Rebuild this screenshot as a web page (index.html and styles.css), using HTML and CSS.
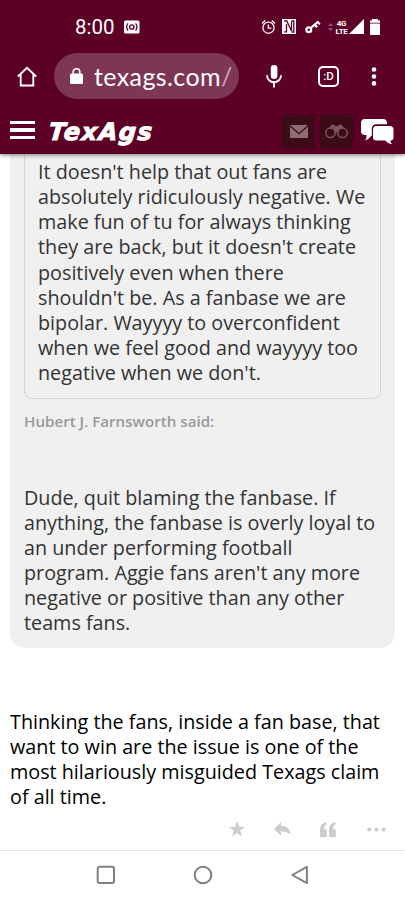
FILE: index.html
```html
<!DOCTYPE html>
<html lang="en">
<head>
    <meta charset="UTF-8">
    <meta name="viewport" content="width=device-width, initial-scale=1.0">
    <title>TexAgs</title>
    <link rel="stylesheet" href="styles.css">
</head>
<body>
    <div class="screen">

        <header class="top">
            <!-- Status bar -->
            <div class="status-bar">
                <span class="clock">8:00</span>
                <svg class="cast" width="16" height="14" viewBox="0 0 16 14">
                    <rect y=".5" width="15.5" height="13" rx="1.5" fill="#fff"/>
                    <g fill="none" stroke="#5c0025" stroke-width="1.3">
                        <circle cx="7.8" cy="7" r="2.2"/>
                        <path d="M4 3.400Q1.300 7 4 10.600M11.600 3.400Q14.300 7 11.600 10.600"/>
                    </g>
                </svg>
                <svg class="alarm" width="15" height="16" viewBox="0 0 15 16" fill="none" stroke="#fff" stroke-width="1.3">
                    <circle cx="7.5" cy="8.7" r="5.6"/>
                    <path d="M7.300 5.500v3.700h3M1 4.400 4.200 1.600M14 4.400 10.800 1.600"/>
                </svg>
                <svg class="nfc" width="14" height="15" viewBox="0 0 14 15">
                    <path fill="#fff" d="M0 0h14v15H0z"/>
                    <path fill="none" stroke="#5c0025" stroke-width="1.3" d="M2.200 2h2.600L9.500 12V2.500M4.500 5v7.800H2.200M9.500 2h2.300v11H9.500"/>
                </svg>
                <svg class="key" width="16" height="15" viewBox="0 0 16 15" fill="none" stroke="#fff" stroke-width="2.2">
                    <circle cx="3.8" cy="10.7" r="2.4"/>
                    <path d="M5.800 9 12.700 3 14.800 5.400M9.800 5.600l2.300 2.600"/>
                </svg>
                <svg class="arrows" width="5" height="8" viewBox="0 0 5 8" fill="#935270">
                    <path d="M0 3 2.500 0 5 3zM0 5h5L2.500 8z"/>
                </svg>
                <span class="network">4G<br>LTE</span>
                <svg class="signal" width="15" height="15" viewBox="0 0 15 15"><path fill="#fff" d="M15 0v15H0z"/></svg>
                <svg class="battery" width="10" height="16" viewBox="0 0 10 16" fill="#fff">
                    <path d="M2 0h6v1.500h2v2.300H0V1.500h2z"/>
                    <rect y="4.5" width="10" height="11.5" rx="1"/>
                </svg>
            </div>

            <!-- Browser toolbar -->
            <div class="toolbar">
                <svg class="home" width="20" height="21" viewBox="0 0 20 21" fill="none" stroke="#fff" stroke-width="1.9">
                    <path d="M.8 10.500 10 1.700l9.200 8.800M3.700 8.500v11h12.600v-11"/>
                </svg>
                <div class="url">
                    <svg width="13" height="17" viewBox="0 0 13 17">
                        <rect y="5.5" width="13" height="10.5" rx="1.5" fill="#fff"/>
                        <path fill="none" stroke="#fff" stroke-width="1.6" d="M3.200 6.500V4a3.300 3.300 0 0 1 6.600 0v2.500"/>
                    </svg>
                    <span class="url-text">texags.com<i>/</i></span>
                </div>
                <svg class="mic" width="16" height="23" viewBox="0 0 16 23">
                    <rect x="4.8" y="0" width="6.6" height="14" rx="3.3" fill="#fff"/>
                    <path fill="none" stroke="#fff" stroke-width="1.9" d="M1 10.300a7 7 0 0 0 14 0M8 17v5.500"/>
                </svg>
                <div class="tabs">:D</div>
                <svg class="more" width="6" height="19" viewBox="0 0 6 19" fill="#fff">
                    <circle cx="3" cy="2.5" r="2.3"/><circle cx="3" cy="9.5" r="2.3"/><circle cx="3" cy="16.4" r="2.3"/>
                </svg>
            </div>

            <!-- Site header -->
            <div class="site-header">
                <div class="menu"><span></span><span></span><span></span></div>
                <span class="logo">TexAgs</span>
                <div class="header-btn">
                    <svg width="18" height="13" viewBox="0 0 18 13">
                        <path fill="#8f6c74" d="M0 0h18L9 7.700zM0 1.700l9 7.800 9-7.800V13H0z"/>
                    </svg>
                </div>
                <div class="header-btn">
                    <svg width="23" height="15" viewBox="0 0 23 15">
                        <g fill="none" stroke="#79555c" stroke-width="1.5">
                            <circle cx="5.5" cy="8.8" r="4.7"/><circle cx="17.5" cy="8.8" r="4.7"/>
                        </g>
                        <path fill="#79555c" d="M3.500 4.500 6.500.8 9 .6l1.300 1.600h2.400L14 .6l2.500.2 3 3.700-5 .8-1.300 3.200h-3.400L8.500 5.300z"/>
                    </svg>
                </div>
                <svg class="chat" width="33" height="27" viewBox="0 0 33 27" fill="#fff">
                    <path d="M4 1h18q4 0 4 4v1.300H15.500q-4.700 0-4.700 4.700v6.500Q8 21 4 22.500 6 20 5.500 17H4q-4 0-4-4V5q0-4 4-4z"/>
                    <path d="M15.500 8H29q3.500 0 3.500 3.500v8q0 3-3 3 0 2 1.500 3.700-4.500-.5-6.500-3.700h-9q-3.500 0-3.500-3v-8q0-3.500 3.500-3.500z"/>
                </svg>
            </div>
        </header>

        <!-- Post -->
        <main class="post">
            <div class="quote">
                <div class="quote-inner">
                    It doesn't help that out fans are<br>
                    absolutely ridiculously negative. We<br>
                    make fun of tu for always thinking<br>
                    they are back, but it doesn't create<br>
                    positively even when there<br>
                    shouldn't be. As a fanbase we are<br>
                    bipolar. Wayyyy to overconfident<br>
                    when we feel good and wayyyy too<br>
                    negative when we don't.
                </div>
                <div class="quote-author">Hubert J. Farnsworth said:</div>
                <p class="quote-text">
                    Dude, quit blaming the fanbase. If<br>
                    anything, the fanbase is overly loyal to<br>
                    an under performing football<br>
                    program. Aggie fans aren't any more<br>
                    negative or positive than any other<br>
                    teams fans.
                </p>
            </div>
            <p class="reply">
                Thinking the fans, inside a fan base, that<br>
                want to win are the issue is one of the<br>
                most hilariously misguided Texags claim<br>
                of all time.
            </p>
            <div class="actions">
                <svg width="16" height="16" viewBox="0 0 16 16">
                    <path d="M8 0l2 5.800 6 .1-4.800 3.700L13 15.500 8 12l-5 3.500 1.800-5.900L0 5.900l6-.1z"/>
                </svg>
                <svg width="17" height="14" viewBox="0 0 17 14">
                    <path d="M7 0v3.700q8.500 0 9.800 9.300Q13 9.200 7 9.500v4L0 6.900z"/>
                </svg>
                <svg width="16" height="15" viewBox="0 0 16 15">
                    <path d="M6.500 0v2.500Q4 3.500 4 7.500h2.800V15H0V8Q0 1.500 6.500 0zM15.500 0v2.500Q13 3.500 13 7.500h2.800V15H9V8Q9 1.500 15.500 0z"/>
                </svg>
                <svg width="19" height="5" viewBox="0 0 19 5">
                    <circle cx="2.3" cy="2.5" r="2.1"/><circle cx="9.5" cy="2.5" r="2.1"/><circle cx="16.7" cy="2.5" r="2.1"/>
                </svg>
            </div>
        </main>

        <!-- Android navigation -->
        <nav class="nav-bar">
            <svg width="20" height="20" viewBox="0 0 20 20"><rect x="1.7" y="1.7" width="16.3" height="16.3" rx="2"/></svg>
            <svg width="20" height="20" viewBox="0 0 20 20"><circle cx="10" cy="10" r="8.3"/></svg>
            <svg width="20" height="20" viewBox="0 0 20 20"><path d="M16.900 1.900v16.200L2.300 10z"/></svg>
        </nav>
    </div>
</body>
</html>
```

FILE: styles.css
```css
* {
    box-sizing: border-box;
}
body {
    margin: 0;
    background-color: #fff;
    color: #000;
    font-family: "Open Sans", "Noto Sans", sans-serif;
}
svg {
    display: block;
    flex-shrink: 0;
}
.screen {
    display: flex;
    flex-direction: column;
    width: 405px;
    height: 900px;
    overflow: hidden;
}
.top {
    position: relative;
    height: 154px;
    flex-shrink: 0;
    background-color: #5c0025;
    color: #fff;
    box-shadow: 0 1px 4px rgba(0, 0, 0, 0.5);
}

/* Status bar */
.status-bar {
    display: flex;
    align-items: center;
    height: 53px;
    padding-left: 75px;
}
.clock {
    width: 49px;
    font-family: Roboto, sans-serif;
    font-size: 20.5px;
    line-height: 20px;
}
.alarm {
    margin-left: 121px;
}
.nfc {
    margin-left: 6px;
}
.key {
    margin-left: 9px;
}
.arrows {
    margin-left: 7px;
}
.network {
    width: 13px;
    margin: 2px 0 0 2px;
    font-family: Roboto, sans-serif;
    font-size: 8px;
    font-weight: bold;
    line-height: 8px;
    letter-spacing: -0.3px;
    text-align: center;
}
.signal {
    margin-left: 1px;
}
.battery {
    margin-left: 6px;
}

/* Browser toolbar */
.toolbar {
    display: flex;
    align-items: center;
    height: 46px;
    padding-left: 17px;
}
.url {
    display: flex;
    align-items: center;
    width: 185px;
    height: 46px;
    margin-left: 17px;
    padding-left: 16px;
    border-radius: 23px;
    background-color: #7e3655;
}
.url-text {
    margin-left: 11px;
    font-family: Lato, sans-serif;
    font-size: 25px;
    line-height: 30px;
    letter-spacing: 0.4px;
    white-space: nowrap;
}
.url-text i {
    font-style: normal;
    color: #c9a5b4;
}
.mic {
    margin-left: 27px;
}
.tabs {
    width: 21px;
    height: 21px;
    margin-left: 36px;
    border: 2px solid #fff;
    border-radius: 5px;
    font-family: Roboto, sans-serif;
    font-size: 11.5px;
    font-weight: 500;
    line-height: 16px;
    text-align: center;
}
.more {
    margin-left: 32px;
}

/* Site header */
.site-header {
    display: flex;
    align-items: center;
    height: 46px;
    margin-top: 9px;
    padding-left: 10px;
}
.menu {
    display: flex;
    flex-direction: column;
    gap: 4px;
    width: 25px;
    margin-top: -2px;
}
.menu span {
    height: 3.5px;
    background-color: #fff;
}
.logo {
    width: 107px;
    margin: 1px 0 0 14px;
    font-family: "DejaVu Sans", sans-serif;
    font-size: 24px;
    font-weight: bold;
    font-style: oblique;
    line-height: 30px;
    letter-spacing: 1.6px;
    -webkit-text-stroke: 1px #fff;
    transform: skewX(-5deg);
}
.header-btn {
    display: flex;
    align-items: center;
    justify-content: center;
    width: 33px;
    height: 33px;
    border-radius: 2px;
    background-color: #3b0c18;
}
.logo + .header-btn {
    margin-left: 126px;
}
.header-btn + .header-btn {
    margin-left: 5px;
}
.chat {
    margin-left: 8px;
}

/* Post */
.post {
    flex: 1;
    padding: 0 10px;
    font-size: 19.75px;
    line-height: 25.15px;
    white-space: nowrap;
}
.quote {
    height: 494px;
    padding: 0 14px;
    border-radius: 0 0 15px 15px;
    background-color: #f0f0f0;
    color: #333;
}
.quote-inner {
    height: 245px;
    padding: 5px 13px 0;
    border: 1px solid #d5d5d5;
    border-top: none;
    border-radius: 0 0 8px 8px;
}
.quote-author {
    margin-top: 10px;
    color: #999;
    font-size: 15.15px;
    font-weight: 600;
}
.quote-text {
    margin: 50.5px 0 0;
}
.reply {
    margin: 60.5px 0 0;
}
.actions {
    display: flex;
    align-items: center;
    height: 16px;
    margin-top: 12px;
    padding-left: 219px;
    fill: #ccc;
}
.actions svg + svg {
    margin-left: 29px;
}
.actions svg:last-child {
    margin-left: 31px;
}

/* Android navigation */
.nav-bar {
    display: flex;
    justify-content: center;
    gap: 77px;
    height: 50px;
    flex-shrink: 0;
    padding-top: 14px;
    border-top: 1px solid #e4e4e4;
    fill: none;
    stroke: #808080;
    stroke-width: 2;
    stroke-linejoin: round;
}
```
